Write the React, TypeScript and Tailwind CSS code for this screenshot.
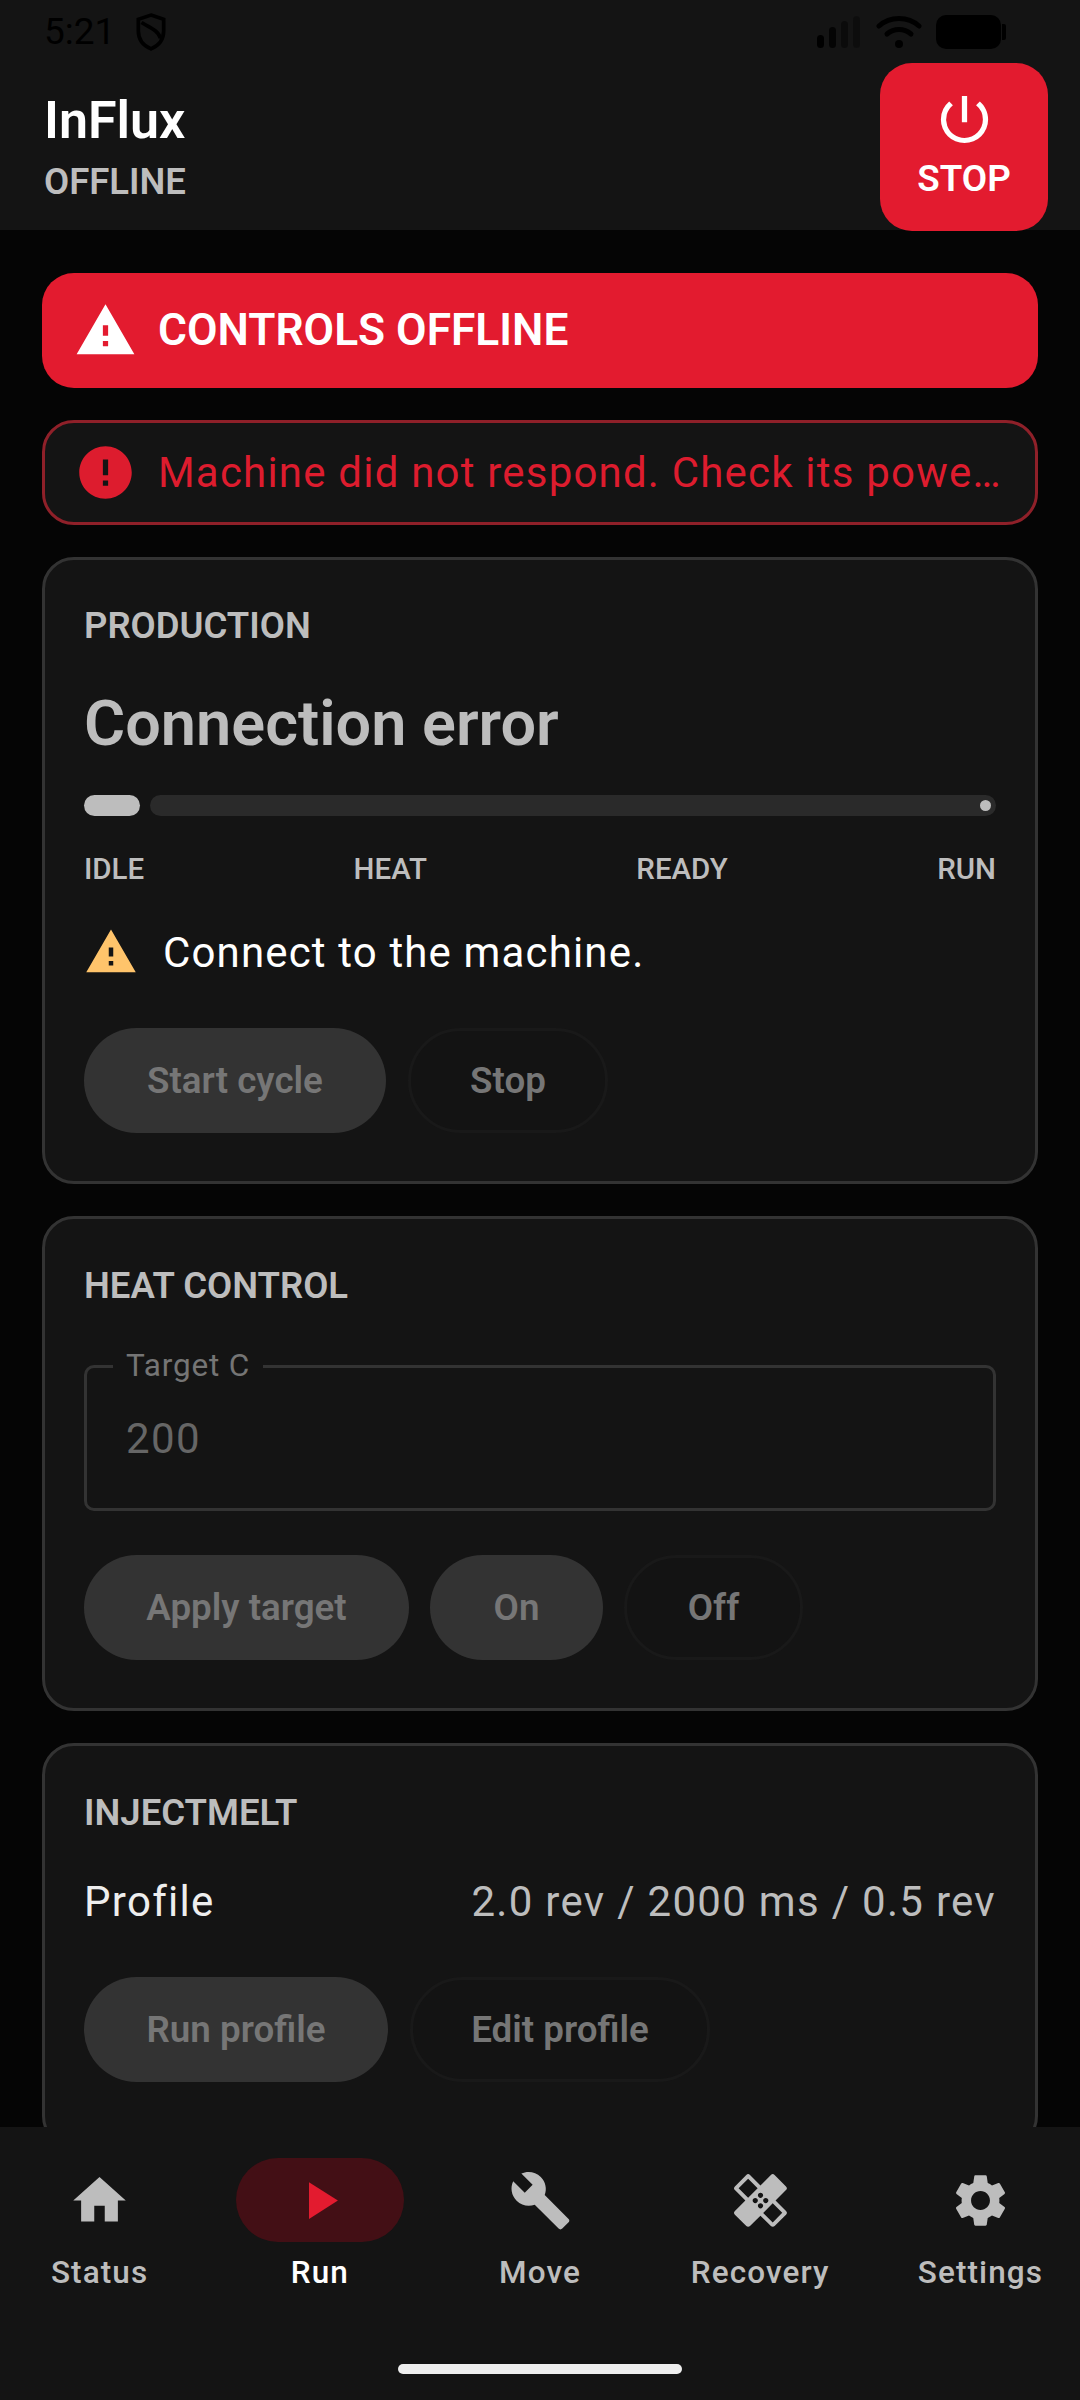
import React from 'react';
import {
  MdBuild,
  MdError,
  MdHealing,
  MdHome,
  MdPlayArrow,
  MdPowerSettingsNew,
  MdSettings,
  MdWarning,
} from 'react-icons/md';

const StatusBar: React.FC = () => (
  <div className="flex h-[63px] items-center justify-between pl-[44px] pr-[74px] text-black">
    <div className="flex items-center gap-[20px]">
      <span className="text-[37px] leading-none">5:21</span>
      <svg width="32" height="38" viewBox="0 0 30 36" fill="none" stroke="currentColor" strokeWidth="3.5">
        <path d="M15 2 L27 6 V17 C27 25 22 31 15 34 C8 31 3 25 3 17 V6 Z" />
        <path d="M6 9 C12 13 22 16 24 24" />
      </svg>
    </div>
    <div className="flex items-center gap-[14px]">
      <svg width="46" height="34" viewBox="0 0 46 34" fill="currentColor">
        <rect x="1" y="20" width="7" height="13" rx="3.5" />
        <rect x="13" y="12" width="7" height="21" rx="3.5" opacity="0.8" />
        <rect x="25" y="6" width="7" height="27" rx="3.5" opacity="0.45" />
        <rect x="37" y="1" width="7" height="32" rx="3.5" opacity="0.3" />
      </svg>
      <svg width="46" height="34" viewBox="0 0 46 34" fill="none" stroke="currentColor" strokeWidth="5" strokeLinecap="round">
        <path d="M3 11 C14 1 32 1 43 11" />
        <path d="M11 19 C18 13 28 13 35 19" />
        <circle cx="23" cy="29" r="4" fill="currentColor" stroke="none" />
      </svg>
      <div className="flex items-center gap-[1px]">
        <div className="h-[34px] w-[65px] rounded-[10px] bg-black" />
        <div className="h-[16px] w-[4px] rounded-r-[2px] bg-black" />
      </div>
    </div>
  </div>
);

const Btn: React.FC<{ label: string; w: string; outline?: boolean }> = ({ label, w, outline }) => (
  <div
    className={`flex h-[105px] items-center justify-center rounded-full text-[36.75px] font-semibold text-[#767676] ${w} ${
      outline ? 'border-[3px] border-[#191919] bg-[#131313]' : 'bg-[#333333]'
    }`}
  >
    {label}
  </div>
);

const Card: React.FC<{ title: string; className?: string; children: React.ReactNode }> = ({ title, className, children }) => (
  <section className={`shrink-0 rounded-[32px] border-[3px] border-[#333333] bg-[#141414] px-[39px] ${className ?? ''}`}>
    <h3 className="text-[36.5px] font-semibold leading-[44px] text-[#bdbdbd]">{title}</h3>
    {children}
  </section>
);

export default function App() {
  const navItems = [
    { label: 'Status', icon: MdHome },
    { label: 'Run', icon: MdPlayArrow, active: true },
    { label: 'Move', icon: MdBuild },
    { label: 'Recovery', icon: MdHealing },
    { label: 'Settings', icon: MdSettings },
  ];

  return (
    <div className="flex h-screen flex-col overflow-hidden bg-[#050505] font-['Roboto',sans-serif]">
      {/* Top bar */}
      <header className="h-[230px] shrink-0 bg-[#141414]">
        <StatusBar />
        <div className="flex items-start justify-between pl-[44px] pr-[32px]">
          <div className="pt-[30px]">
            <div className="text-[52px] font-semibold leading-[56px] text-white">InFlux</div>
            <div className="mt-[11px] text-[36.5px] font-semibold leading-[44px] text-[#bdbdbd]">OFFLINE</div>
          </div>
          <button className="flex h-[168px] w-[168px] flex-col items-center justify-center rounded-[32px] bg-[#e31b2f] pb-[5px] text-white">
            <MdPowerSettingsNew size={63} />
            <span className="mt-[6px] text-[36.75px] font-semibold leading-[44px]">STOP</span>
          </button>
        </div>
      </header>

      {/* Scrolling content */}
      <main className="flex min-h-0 flex-1 flex-col gap-[32px] overflow-hidden px-[42px] pt-[43px]">
        <div className="flex h-[115px] shrink-0 items-center gap-[21px] rounded-[32px] bg-[#e31b2f] px-[32px] text-white">
          <MdWarning size={63} className="shrink-0" />
          <span className="text-[44.3px] font-semibold">CONTROLS OFFLINE</span>
        </div>

        <div className="flex h-[105px] shrink-0 items-center gap-[21px] rounded-[32px] border-[3px] border-[#8f2029] bg-[#141414] px-[29px] text-[#dd1c2e]">
          <MdError size={63} className="shrink-0" />
          <span className="min-w-0 flex-1 truncate text-[42px] tracking-[1.2px]">
            Machine did not respond. Check its power and connection.
          </span>
        </div>

        <Card title="PRODUCTION" className="h-[627px] pt-[44px]">
          <div className="mt-[38px] text-[63px] font-semibold leading-[76px] text-[#bdbdbd]">Connection error</div>
          <div className="mt-[33px] flex h-[21px] gap-[10px]">
            <div className="w-[56px] rounded-full bg-[#bdbdbd]" />
            <div className="relative flex-1 rounded-full bg-[#2a2a2a]">
              <div className="absolute right-[5px] top-[5px] size-[11px] rounded-full bg-[#bdbdbd]" />
            </div>
          </div>
          <div className="mt-[33px] flex justify-between text-[29.5px] font-medium leading-[40px] text-[#bdbdbd]">
            <span>IDLE</span>
            <span>HEAT</span>
            <span>READY</span>
            <span>RUN</span>
          </div>
          <div className="mt-[37px] flex h-[52px] items-center gap-[25px]">
            <MdWarning size={54} className="shrink-0 text-[#ffc46b]" />
            <span className="text-[42px] tracking-[1.15px] text-white">Connect to the machine.</span>
          </div>
          <div className="mt-[50px] flex gap-[22px]">
            <Btn label="Start cycle" w="w-[302px]" />
            <Btn label="Stop" w="w-[200px]" outline />
          </div>
        </Card>

        <Card title="HEAT CONTROL" className="h-[495px] pt-[45px]">
          <div className="relative mt-[57px] flex h-[146px] items-center rounded-[10px] border-[3px] border-[#333333] px-[39px] text-[42px] tracking-[1.4px] text-[#666666]">
            <span className="absolute left-[26px] top-[-22px] bg-[#141414] px-[13px] text-[31.5px] leading-[40px] tracking-[0.8px] text-[#757575]">Target C</span>
            200
          </div>
          <div className="mt-[44px] flex gap-[21px]">
            <Btn label="Apply target" w="w-[325px]" />
            <Btn label="On" w="w-[173px]" />
            <Btn label="Off" w="w-[179px]" outline />
          </div>
        </Card>

        <Card title="INJECTMELT" className="h-[405px] pt-[45px]">
          <div className="mt-[37px] flex items-center justify-between text-[42px] leading-[60px] tracking-[1.3px]">
            <span className="text-[#eeeeee]">Profile</span>
            <span className="text-[#bdbdbd]">2.0 rev / 2000 ms / 0.5 rev</span>
          </div>
          <div className="mt-[45px] flex gap-[22px]">
            <Btn label="Run profile" w="w-[304px]" />
            <Btn label="Edit profile" w="w-[300px]" outline />
          </div>
        </Card>
      </main>

      {/* Bottom navigation */}
      <nav className="relative h-[273px] shrink-0 bg-[#141414] pt-[31px]">
        <div className="flex gap-[21px]">
          {navItems.map((item) => (
            <div key={item.label} className="flex flex-1 flex-col items-center">
              <div className={`flex h-[84px] w-[168px] items-center justify-center rounded-full ${item.active ? 'bg-[#430f15]' : ''}`}>
                <item.icon size={63} className={item.active ? 'text-[#e31b2f]' : 'text-[#bdbdbd]'} />
              </div>
              <span className={`mt-[10px] text-[31.5px] font-medium leading-[42px] tracking-[1.1px] ${item.active ? 'text-white' : 'text-[#bdbdbd]'}`}>
                {item.label}
              </span>
            </div>
          ))}
        </div>
        <div className="absolute bottom-[26px] left-[398px] h-[10px] w-[284px] rounded-full bg-[#eeeeee]" />
      </nav>
    </div>
  );
}
